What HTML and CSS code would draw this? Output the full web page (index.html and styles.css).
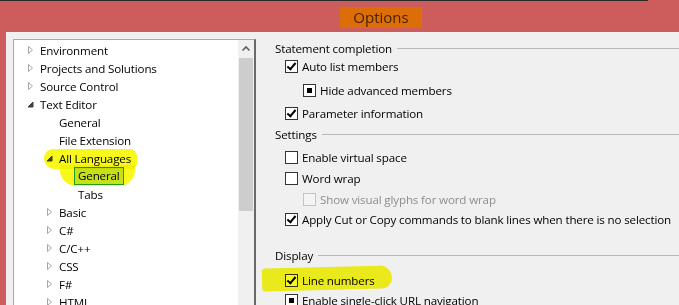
FILE: index.html
```html
<!DOCTYPE html>
<html>
  <head>
    <meta charset="utf-8">
    <title>Options</title>
    <link rel="stylesheet" href="styles.css">
  </head>
  <body>
    <div class="window">
      <div class="edge"></div>
      <div class="titlebar"><span class="title">Options</span></div>
      <div class="dialog">
        <div class="tree">
          <ul class="nodes">
            <li class="node lv0"><svg class="tw" viewBox="0 0 16 18"><path d="M4.5 5.5 L8.5 9 L4.5 12.5 Z"/></svg>Environment</li>
            <li class="node lv0"><svg class="tw" viewBox="0 0 16 18"><path d="M4.5 5.5 L8.5 9 L4.5 12.5 Z"/></svg>Projects and Solutions</li>
            <li class="node lv0"><svg class="tw" viewBox="0 0 16 18"><path d="M4.5 5.5 L8.5 9 L4.5 12.5 Z"/></svg>Source Control</li>
            <li class="node lv0"><svg class="tw open" viewBox="0 0 16 18"><path d="M4 12 L9 7 L9 12 Z"/></svg>Text Editor</li>
            <li class="node lv1"><span class="tw"></span>General</li>
            <li class="node lv1"><span class="tw"></span>File Extension</li>
            <li class="node lv1"><svg class="tw open" viewBox="0 0 16 18"><path d="M4 12 L9 7 L9 12 Z"/></svg>All Languages</li>
            <li class="node lv2"><span class="tw"></span><span class="selected">General</span></li>
            <li class="node lv2"><span class="tw"></span>Tabs</li>
            <li class="node lv1"><svg class="tw" viewBox="0 0 16 18"><path d="M4.5 5.5 L8.5 9 L4.5 12.5 Z"/></svg>Basic</li>
            <li class="node lv1"><svg class="tw" viewBox="0 0 16 18"><path d="M4.5 5.5 L8.5 9 L4.5 12.5 Z"/></svg>C#</li>
            <li class="node lv1"><svg class="tw" viewBox="0 0 16 18"><path d="M4.5 5.5 L8.5 9 L4.5 12.5 Z"/></svg>C/C++</li>
            <li class="node lv1"><svg class="tw" viewBox="0 0 16 18"><path d="M4.5 5.5 L8.5 9 L4.5 12.5 Z"/></svg>CSS</li>
            <li class="node lv1"><svg class="tw" viewBox="0 0 16 18"><path d="M4.5 5.5 L8.5 9 L4.5 12.5 Z"/></svg>F#</li>
            <li class="node lv1"><svg class="tw" viewBox="0 0 16 18"><path d="M4.5 5.5 L8.5 9 L4.5 12.5 Z"/></svg>HTML</li>
          </ul>
          <div class="scrollbar">
            <div class="scroll-up"><svg viewBox="0 0 16 17" width="16" height="17"><path d="M4.5 10.5 L8 7 L11.5 10.5" fill="none" stroke="#606060" stroke-width="1.6"/></svg></div>
            <div class="thumb"></div>
          </div>
          <div class="mark mark-lang"></div>
          <div class="mark mark-general"></div>
        </div>

        <div class="pane">
          <div class="group"><span>Statement completion</span><i class="rule"></i></div>
          <div class="opt lv1 r-auto"><span class="box checked"></span>Auto list members</div>
          <div class="opt lv2 r-hide"><span class="box mixed"></span>Hide advanced members</div>
          <div class="opt lv1 r-param"><span class="box checked"></span>Parameter information</div>
          <div class="group r-settings"><span>Settings</span><i class="rule"></i></div>
          <div class="opt lv1 r-virtual"><span class="box"></span>Enable virtual space</div>
          <div class="opt lv1 r-step"><span class="box"></span>Word wrap</div>
          <div class="opt lv2 r-step disabled"><span class="box"></span>Show visual glyphs for word wrap</div>
          <div class="opt lv1"><span class="box checked"></span>Apply Cut or Copy commands to blank lines when there is no selection</div>
          <div class="group r-display"><span>Display</span><i class="rule"></i></div>
          <div class="opt lv1 r-lines"><span class="box checked"></span>Line numbers</div>
          <div class="opt lv1"><span class="box mixed"></span>Enable single-click URL navigation</div>
          <div class="mark mark-lines"></div>
        </div>
      </div>
    </div>
  </body>
</html>
```

FILE: styles.css
```css
body {
  margin: 0;
  background: #cd5d5d;
  font-family: "Open Sans", "Noto Sans", sans-serif;
  font-size: 11.6px;
  letter-spacing: -0.15px;
  color: #000;
  overflow: hidden;
}

.window {
  width: 679px;
  height: 305px;
  overflow: hidden;
}

.edge {
  width: 648px;
  height: 1px;
  background: #2a2a2a;
}

/* title sits right of centre in the original */
.titlebar {
  height: 31px;
  display: flex;
  justify-content: center;
  align-items: center;
  padding-left: 83px;
  padding-top: 2px;
  box-sizing: border-box;
}

.title {
  background: #dc6e08;
  color: #4a2000;
  font-size: 15px;
  letter-spacing: 0;
  width: 82px;
  height: 21px;
  line-height: 21px;
  text-align: center;
}

.dialog {
  margin-left: 6px;
  padding-left: 7px;
  height: 273px;
  box-sizing: border-box;
  background: #f0f0f0;
  display: flex;
}

/* tree */
.tree {
  position: relative;
  width: 240px;
  height: 280px;
  margin-top: 7px;
  flex: none;
  display: flex;
  background: #fff;
  border: 1px solid #a9a9a9;
  border-right: 2px solid #6a6a6a;
  border-bottom: none;
}

.nodes {
  list-style: none;
  margin: 0;
  padding: 1px 0 0;
  flex: 1;
}

.node {
  display: flex;
  align-items: center;
  height: 18px;
  white-space: nowrap;
}

.lv0 { padding-left: 10px; }
.lv1 { padding-left: 29px; }
.lv2 { padding-left: 48px; }

.tw {
  width: 16px;
  height: 18px;
  flex: none;
}

.tw path {
  fill: #fff;
  stroke: #a6a6a6;
  stroke-width: 1;
}

.tw.open path {
  fill: #404040;
  stroke: #404040;
}

.selected {
  margin-left: -4px;
  padding: 0 3px;
  height: 18px;
  line-height: 16px;
  box-sizing: border-box;
  background: #cce8ff;
  border: 1px solid #26a0da;
}

.scrollbar {
  width: 16px;
  flex: none;
  background: #f0f0f0;
  display: flex;
  flex-direction: column;
}

.scroll-up {
  height: 18px;
}

.thumb {
  height: 153px;
  margin: 0 1px;
  background: #cdcdcd;
}

/* highlighter marks laid over the screenshot */
.mark {
  position: absolute;
  background: #f8f81c;
  mix-blend-mode: multiply;
}

.mark-lang {
  left: 30px;
  top: 109px;
  width: 93px;
  height: 20px;
  border-radius: 10px 8px 6px 12px;
}

.mark-general {
  left: 46px;
  top: 125px;
  width: 75px;
  height: 21px;
  border-radius: 0 0 16px 16px;
}

/* options pane */
.pane {
  position: relative;
  flex: 1;
  padding: 6px 0 0 19px;
}

.group {
  display: flex;
  align-items: center;
  height: 20px;
  white-space: nowrap;
}

.rule {
  flex: 1;
  height: 1px;
  margin-left: 5px;
  background: #b9b9b9;
}

.opt {
  display: flex;
  align-items: center;
  height: 20px;
  white-space: nowrap;
}

.opt.lv1 { padding-left: 10px; }
.opt.lv2 { padding-left: 28px; }

.r-auto { margin-top: -2px; }
.r-hide { margin-top: 4px; }
.r-param { margin-top: 3px; }
.r-settings { margin-top: 1px; }
.r-virtual { margin-top: 3px; }
.r-step { margin-top: 1px; }
.r-display { margin-top: 16px; }
.r-lines { margin-top: 5px; }

.box {
  position: relative;
  width: 13px;
  height: 13px;
  margin-right: 4px;
  box-sizing: border-box;
  background: #fff;
  border: 1px solid #333;
  flex: none;
}

.box.checked::after {
  content: "";
  position: absolute;
  left: 3px;
  top: 0;
  width: 3px;
  height: 7px;
  border: solid #000;
  border-width: 0 2px 2px 0;
  transform: rotate(40deg);
}

.box.mixed::after {
  content: "";
  position: absolute;
  left: 3px;
  top: 3px;
  width: 5px;
  height: 5px;
  background: #000;
}

.disabled {
  color: #8d8d8d;
}

.disabled .box {
  border-color: #c4c4c4;
  background: #f4f4f4;
}

.mark-lines {
  left: 6px;
  top: 235px;
  width: 130px;
  height: 23px;
  border-radius: 4px 14px 12px 4px;
  transform: rotate(-1.5deg);
}
```
